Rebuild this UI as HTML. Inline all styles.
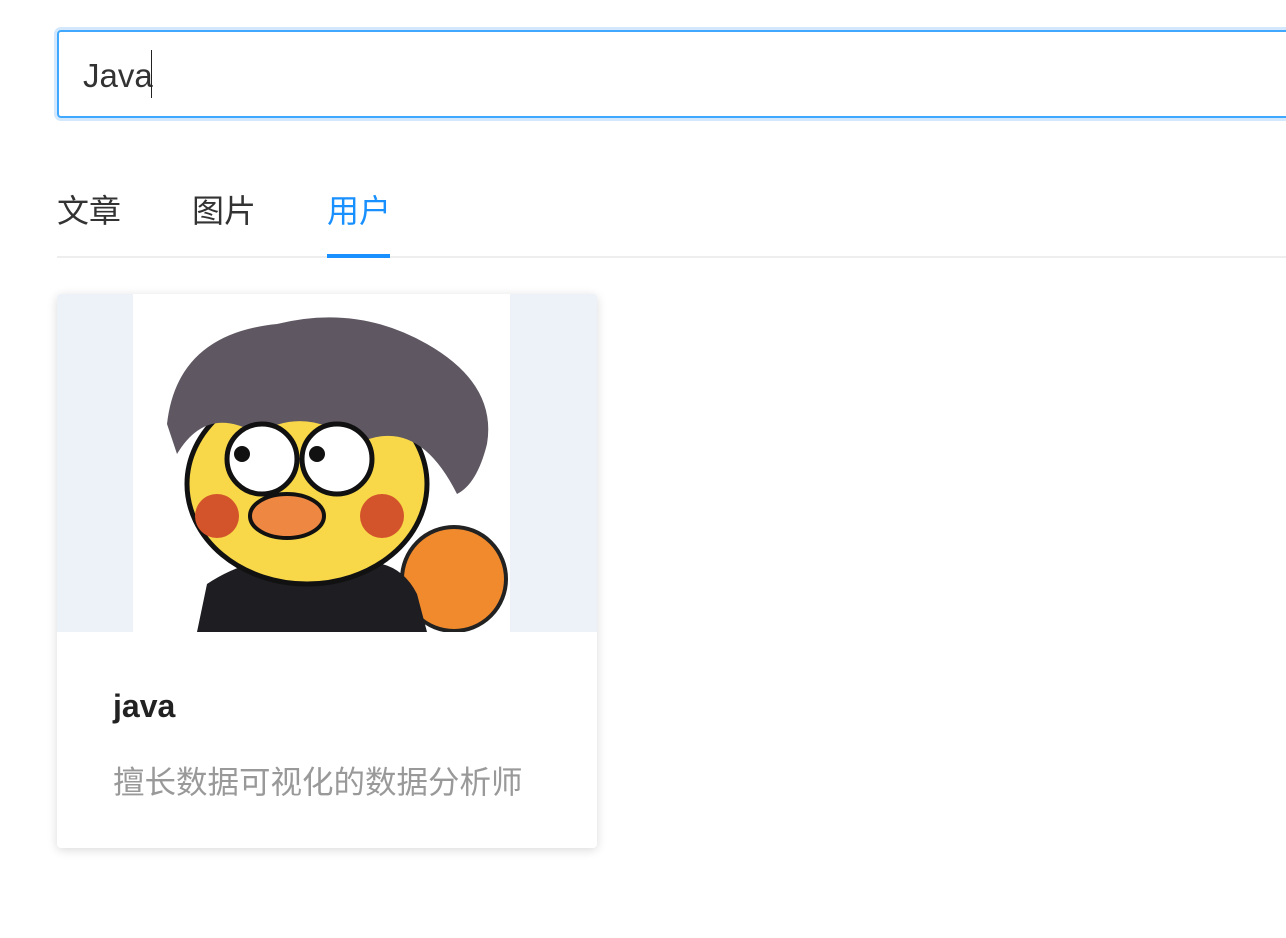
<!DOCTYPE html>
<html><head><meta charset="utf-8"><style>
body{margin:0;background:#fff;width:1286px;height:938px;overflow:hidden;font-family:"Liberation Sans","Noto Sans CJK SC",sans-serif;position:relative}
.inp{position:absolute;left:57px;top:30px;width:1240px;height:84px;border:2px solid #40a9ff;border-radius:4px;box-shadow:0 0 0 3px #d3e8fd}
.inp span{position:absolute;left:24px;top:25px;font-size:33px;color:#333}
.inp i{position:absolute;left:92px;top:18px;width:1px;height:48px;background:#222}
.tab{position:absolute;top:186px;font-size:32px;color:#333}
.line{position:absolute;left:57px;top:256px;width:1229px;height:2px;background:#eee}
.ul{position:absolute;left:327px;top:254px;width:63px;height:4px;background:#1890ff}
.card{position:absolute;left:57px;top:294px;width:540px;height:554px;background:#fff;border-radius:4px;box-shadow:0 2px 10px rgba(0,0,0,.15);overflow:hidden}
.img{position:absolute;left:0;top:0;width:540px;height:338px;background:#edf2f8}
</style></head><body>
<div class="inp"><span>Java</span><i></i></div>
<div class="tab" style="left:57px">文章</div>
<div class="tab" style="left:192px">图片</div>
<div class="tab" style="left:327px;color:#1890ff">用户</div>
<div class="line"></div><div class="ul"></div>
<div class="card">
<div class="img">
<svg width="540" height="338" style="position:absolute;left:0;top:0">
<rect x="76" y="0" width="377" height="338" fill="#fff"/>
<circle cx="397" cy="285" r="52" fill="#f08a2c" stroke="#222" stroke-width="4"/>
<path d="M150 290 Q210 250 290 270 Q340 260 360 300 L370 338 L140 338 Z" fill="#1d1d22"/>
<ellipse cx="250" cy="190" rx="120" ry="100" fill="#f8d848" stroke="#111" stroke-width="5"/>
<path d="M110 130 Q120 40 220 30 Q300 10 370 50 Q440 90 430 150 Q420 190 400 200 Q360 120 300 150 Q250 110 200 140 Q150 110 120 160 Z" fill="#5f5863"/>
<circle cx="205" cy="165" r="35" fill="#fff" stroke="#111" stroke-width="5"/>
<circle cx="280" cy="165" r="35" fill="#fff" stroke="#111" stroke-width="5"/>
<circle cx="185" cy="160" r="8" fill="#111"/><circle cx="260" cy="160" r="8" fill="#111"/>
<circle cx="160" cy="222" r="22" fill="#d3532a"/><circle cx="325" cy="222" r="22" fill="#d3532a"/>
<ellipse cx="230" cy="222" rx="37" ry="22" fill="#ee8742" stroke="#111" stroke-width="4"/>
</svg>
</div>
<div style="position:absolute;left:56px;top:394px;font-size:32px;font-weight:bold;color:#222">java</div>
<div style="position:absolute;left:56px;top:463px;font-size:31.5px;color:#999;white-space:nowrap">擅长数据可视化的数据分析师</div>
</div>
</body></html>
